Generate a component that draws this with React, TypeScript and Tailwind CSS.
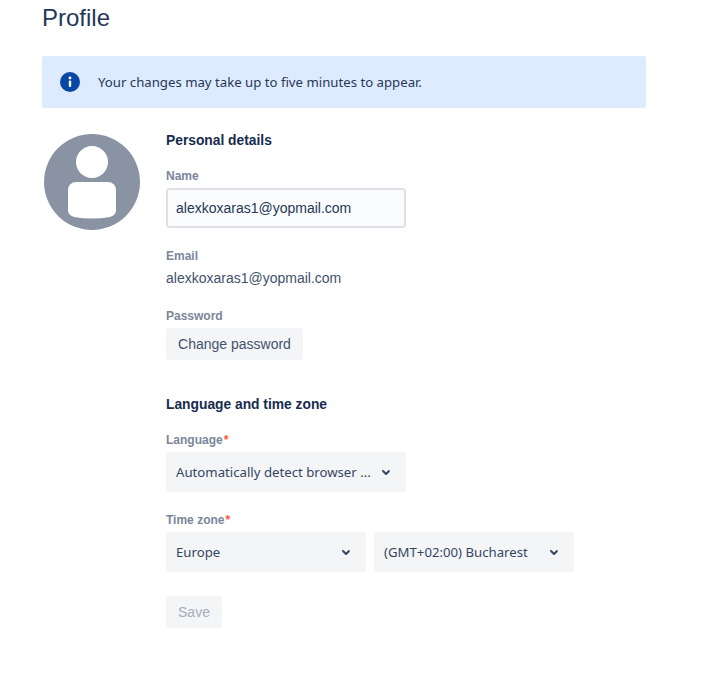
import type { ReactNode } from 'react'

function Chevron() {
  return (
    <svg width="24" height="24" viewBox="0 0 24 24" className="shrink-0 text-[#344563]">
      <path
        d="M8.3 10.3a1 1 0 0 1 1.4 0L12 12.6l2.3-2.3a1 1 0 0 1 1.4 1.4l-3 3a1 1 0 0 1-1.4 0l-3-3a1 1 0 0 1 0-1.4z"
        fill="currentColor"
      />
    </svg>
  )
}

function Select({ text, width }: { text: string; width: string }) {
  return (
    <div className={`flex h-10 items-center justify-between rounded-[3px] bg-[#f4f5f7] pl-2.5 pr-2 ${width}`}>
      <span className="pt-0.5 font-['Noto_Sans',sans-serif] text-[13.2px] whitespace-nowrap text-[#344563]">{text}</span>
      <Chevron />
    </div>
  )
}

function Label({ children, required }: { children: ReactNode; required?: boolean }) {
  return (
    <div className="text-xs leading-4 font-bold text-[#7a869a]">
      {children}
      {required && <span className="ml-px text-[#ff5630]">*</span>}
    </div>
  )
}

function Heading({ children }: { children: ReactNode }) {
  return <h2 className="text-[13.8px] leading-4 font-bold text-[#172b4d]">{children}</h2>
}

export default function App() {
  return (
    <div className="h-[682px] w-[722px] overflow-hidden bg-white pl-[42px] font-['Liberation_Sans',sans-serif]">
      <h1 className="pt-1 text-2xl leading-7 text-[#253858]">Profile</h1>

      <div className="mt-6 flex h-[52px] w-[604px] items-center rounded-[3px] bg-[#deebff] pl-[18px]">
        <svg width="20" height="20" viewBox="0 0 20 20" className="shrink-0">
          <circle cx="10" cy="10" r="10" fill="#0747a6" />
          <circle cx="10" cy="6" r="1.4" fill="#fff" />
          <rect x="8.8" y="8.6" width="2.4" height="6.4" rx="1" fill="#fff" />
        </svg>
        <p className="ml-[18px] pt-0.5 font-['Noto_Sans',sans-serif] text-[13.2px] text-[#253858]">
          Your changes may take up to five minutes to appear.
        </p>
      </div>

      <div className="mt-[26px] flex">
        <svg width="96" height="96" viewBox="0 0 96 96" className="ml-0.5 shrink-0">
          <circle cx="48" cy="48" r="48" fill="#8993a4" />
          <circle cx="48" cy="28" r="16" fill="#fff" />
          <path d="M32 48h32a8 8 0 0 1 8 8v20c0 4-3 6-6 7-12 2-24 2-36 0-3-1-6-3-6-7V56a8 8 0 0 1 8-8z" fill="#fff" />
        </svg>

        <div className="-mt-px ml-[26px] flex-1">
          <Heading>Personal details</Heading>

          <div className="mt-[19px]">
            <Label>Name</Label>
            <div className="mt-1 flex h-10 w-60 items-center rounded-[3px] border-2 border-[#dfe1e6] bg-[#fafbfc] pl-2 text-sm text-[#253858]">
              alexkoxaras1@yopmail.com
            </div>
          </div>

          <div className="mt-5">
            <Label>Email</Label>
            <div className="mt-1 text-sm leading-5 text-[#42526e]">alexkoxaras1@yopmail.com</div>
          </div>

          <div className="mt-5">
            <Label>Password</Label>
            <button className="mt-1 flex h-8 w-[137px] items-center justify-center rounded-[3px] bg-[#f4f5f7] text-sm text-[#42526e]">
              Change password
            </button>
          </div>

          <div className="mt-[37px]">
            <Heading>Language and time zone</Heading>
          </div>

          <div className="mt-[19px]">
            <Label required>Language</Label>
            <div className="mt-1">
              <Select text="Automatically detect browser ..." width="w-60" />
            </div>
          </div>

          <div className="mt-5">
            <Label required>Time zone</Label>
            <div className="mt-1 flex gap-2">
              <Select text="Europe" width="w-[200px]" />
              <Select text="(GMT+02:00) Bucharest" width="w-[200px]" />
            </div>
          </div>

          <button className="mt-6 flex h-8 w-14 items-center justify-center rounded-[3px] bg-[#f4f5f7] text-sm text-[#a5adba]">
            Save
          </button>
        </div>
      </div>
    </div>
  )
}
